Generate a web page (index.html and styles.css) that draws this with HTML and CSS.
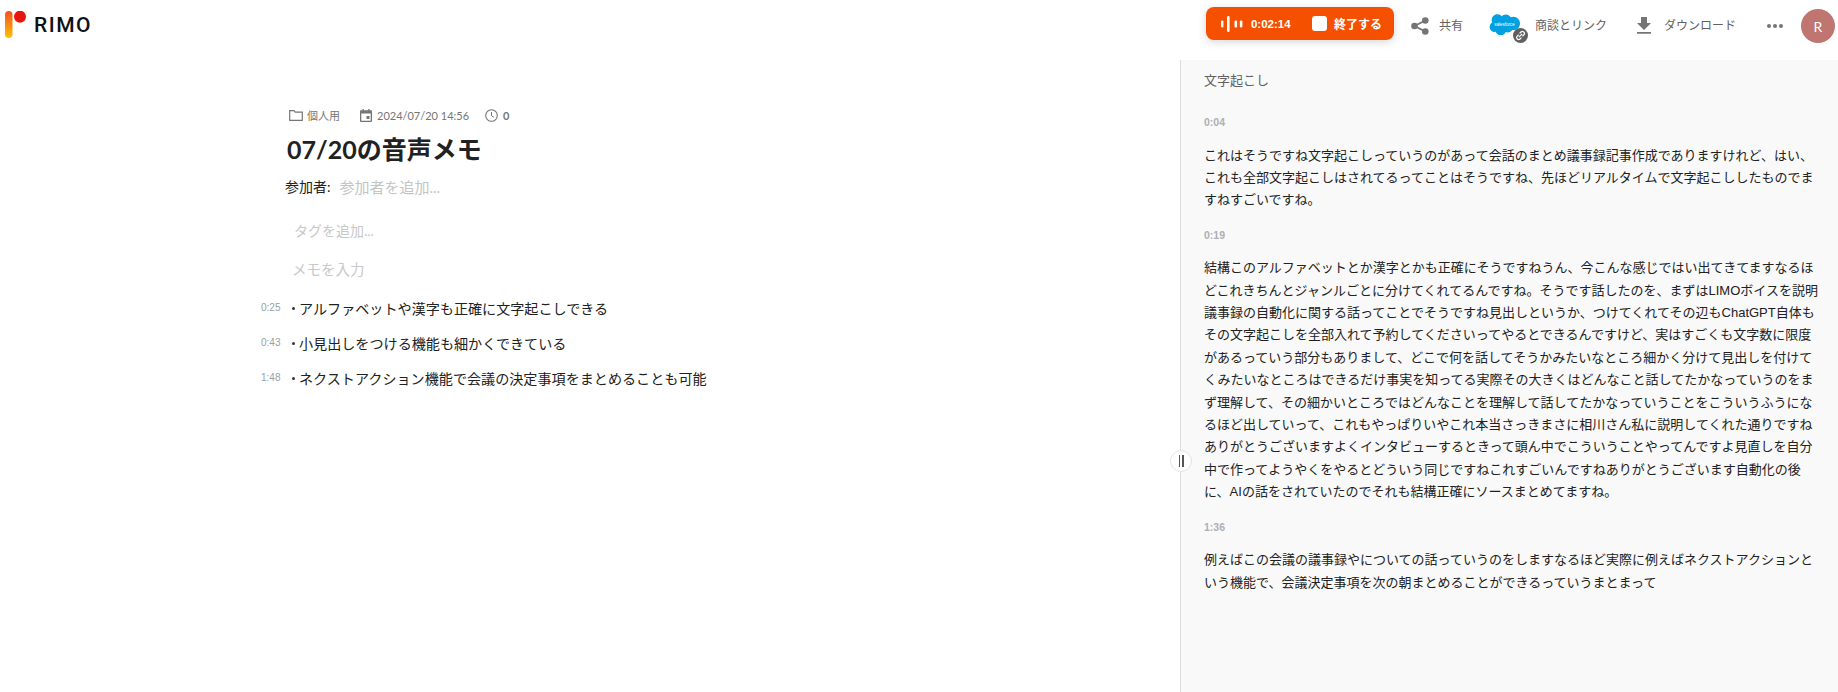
FILE: index.html
```html
<!DOCTYPE html>
<html lang="ja">
<head>
<meta charset="utf-8">
<title>07/20の音声メモ</title>
<link rel="stylesheet" href="styles.css">
</head>
<body>
<header class="topbar">
  <div class="brand">
    <svg class="brand-mark" width="26" height="28" viewBox="0 0 26 28"><defs><linearGradient id="g" x1="0" y1="0" x2="0" y2="1"><stop offset="0" stop-color="#f4511e"/><stop offset="1" stop-color="#ffc107"/></linearGradient></defs><rect x="0" y="0" width="7.500" height="27" rx="3.750" fill="url(#g)"/><circle cx="15" cy="5.700" r="6" fill="#e8160c"/></svg>
    <span class="brand-name">RIMO</span>
  </div>
  <div class="actions">
    <div class="rec">
      <svg class="rec-wave" width="22" height="18" viewBox="0 0 22 18"><g fill="#fff"><rect x="0" y="5.500" width="2.400" height="7" rx="1"/><rect x="6" y="1" width="2.600" height="16" rx="1.200"/><rect x="13.500" y="5.500" width="2.600" height="7" rx="1"/><rect x="18.800" y="5.500" width="2.600" height="7" rx="1"/></g></svg>
      <span class="rec-time">0:02:14</span>
      <span class="rec-stop"></span>
      <span class="rec-label">終了する</span>
    </div>
    <div class="action action-share">
      <svg class="icon-share" width="18" height="18" viewBox="0 0 18 18"><g fill="#757575"><circle cx="14.300" cy="3.500" r="3.300"/><circle cx="3.500" cy="9" r="3.300"/><circle cx="14.300" cy="14.500" r="3.300"/></g><path d="M14.300 3.500L3.500 9l10.800 5.500" fill="none" stroke="#757575" stroke-width="1.800"/></svg>
      <span>共有</span>
    </div>
    <div class="action action-sf">
      <span class="sf">
        <svg width="31" height="22" viewBox="0 0 31 22"><path fill="#00a1e0" d="M12.800 3.200C13.800 2.100 15.200 1.400 16.800 1.400c2.100 0 3.900 1.200 4.900 2.900.8-.4 1.800-.6 2.700-.6 3.700 0 6.600 3 6.600 6.700s-3 6.700-6.600 6.700c-.5 0-.9 0-1.300-.1-.8 1.500-2.400 2.500-4.200 2.500-.8 0-1.500-.2-2.100-.5-.8 2-2.800 3.300-5 3.300-2.300 0-4.300-1.500-5.100-3.500-.3.100-.7.100-1.100.1-2.700 0-4.900-2.200-4.900-5 0-1.900 1-3.500 2.500-4.400-.3-.7-.5-1.500-.5-2.300C2.700 3.900 5.300 1.300 8.400 1.300c1.800 0 3.400.8 4.400 1.900z"/><text x="15.500" y="12.500" class="sf-text" text-anchor="middle">salesforce</text></svg>
        <svg class="sf-badge" width="15" height="15" viewBox="0 0 16 16"><circle cx="8" cy="8" r="8" fill="#5f5f5f"/><g fill="none" stroke="#fff" stroke-width="1.300"><path d="M7 5.800l1.500-1.500a2 2 0 0 1 3 3L10 8.800"/><path d="M9 10.200l-1.500 1.500a2 2 0 0 1-3-3L6 7.200"/><path d="M6.200 9.800l3.600-3.600"/></g></svg>
      </span>
      <span>商談とリンク</span>
    </div>
    <div class="action action-dl">
      <svg class="icon-dl" width="16" height="17" viewBox="0 0 16 17"><path fill="#757575" d="M5 0h6v6h4l-7 7-7-7h4zM1 15h14v1.700H1z"/></svg>
      <span>ダウンロード</span>
    </div>
    <div class="more"><i></i><i></i><i></i></div>
    <div class="avatar">R</div>
  </div>
</header>
<main class="main">
  <section class="note">
    <div class="meta">
      <span class="meta-item meta-folder">
        <svg width="14" height="11" viewBox="0 0 14 11"><path fill="none" stroke="#757575" stroke-width="1.200" d="M.7.700h4.300l1.200 1.400h7.100v8.200H.7z"/></svg>個人用</span>
      <span class="meta-item meta-date">
        <svg width="12" height="13" viewBox="0 0 12 13"><path fill="#757575" d="M2.500 0h1.300v1.300h4.400V0h1.300v1.300H11a1 1 0 0 1 1 1V12a1 1 0 0 1-1 1H1a1 1 0 0 1-1-1V2.300a1 1 0 0 1 1-1h1.500zM1.300 4.500v7.200h9.400V4.500z"/><rect x="6.500" y="7" width="3" height="3" fill="#757575"/></svg>2024/07/20 14:56</span>
      <span class="meta-item meta-clock">
        <svg width="13" height="13" viewBox="0 0 13 13"><circle cx="6.500" cy="6.500" r="5.800" fill="none" stroke="#757575" stroke-width="1.100"/><path d="M6.500 3v3.800l2.500 1.500" fill="none" stroke="#757575" stroke-width="1"/></svg>0</span>
    </div>
    <h1 class="title">07/20の音声メモ</h1>
    <div class="people"><span class="people-label">参加者:</span><span class="people-add">参加者を追加...</span></div>
    <div class="tags">タグを追加...</div>
    <div class="memo">メモを入力</div>
    <ul class="points">
      <li class="point"><span class="point-time">0:25</span><span class="point-dot"></span><span>アルファベットや漢字も正確に文字起こしできる</span></li>
      <li class="point"><span class="point-time">0:43</span><span class="point-dot"></span><span>小見出しをつける機能も細かくできている</span></li>
      <li class="point"><span class="point-time">1:48</span><span class="point-dot"></span><span>ネクストアクション機能で会議の決定事項をまとめることも可能</span></li>
    </ul>
  </section>
  <aside class="transcript">
    <span class="handle"><i></i><i></i></span>
    <div class="transcript-head">文字起こし</div>
    <div class="seg">
      <div class="seg-time">0:04</div>
      <p class="seg-text">これはそうですね文字起こしっていうのがあって会話のまとめ議事録記事作成でありますけれど、はい、これも全部文字起こしはされてるってことはそうですね、先ほどリアルタイムで文字起こししたものでますねすごいですね。</p>
    </div>
    <div class="seg">
      <div class="seg-time">0:19</div>
      <p class="seg-text">結構このアルファベットとか漢字とかも正確にそうですねうん、今こんな感じではい出てきてますなるほどこれきちんとジャンルごとに分けてくれてるんですね。そうです話したのを、まずはLIMOボイスを説明議事録の自動化に関する話ってことでそうですね見出しというか、つけてくれてその辺もChatGPT自体もその文字起こしを全部入れて予約してくださいってやるとできるんですけど、実はすごくも文字数に限度があるっていう部分もありまして、どこで何を話してそうかみたいなところ細かく分けて見出しを付けてくみたいなところはできるだけ事実を知ってる実際その大きくはどんなこと話してたかなっていうのをまず理解して、その細かいところではどんなことを理解して話してたかなっていうことをこういうふうになるほど出していって、これもやっぱりいやこれ本当さっきまさに相川さん私に説明してくれた通りですねありがとうございますよくインタビューするときって頭ん中でこういうことやってんですよ見直しを自分中で作ってようやくをやるとどういう同じですねこれすごいんですねありがとうございます自動化の後に、AIの話をされていたのでそれも結構正確にソースまとめてますね。</p>
    </div>
    <div class="seg">
      <div class="seg-time">1:36</div>
      <p class="seg-text">例えばこの会議の議事録やについての話っていうのをしますなるほど実際に例えばネクストアクションという機能で、会議決定事項を次の朝まとめることができるっていうまとまって</p>
    </div>
  </aside>
</main>
</body>
</html>
```
FILE: styles.css
```css
* { box-sizing: border-box; }
html, body { margin: 0; height: 100%; overflow: hidden; }
body {
  font-family: Lato, "Noto Sans CJK JP", sans-serif;
  color: #212121;
  background: #fff;
  width: 1838px;
  height: 692px;
}
.topbar {
  height: 60px;
  display: flex;
  align-items: flex-start;
  justify-content: space-between;
}
.brand { display: flex; align-items: flex-start; padding: 11px 0 0 5px; }
.brand-mark { display: block; flex: none; }
.brand-name {
  font-family: Roboto, sans-serif;
  font-weight: 500;
  font-size: 21px;
  line-height: 20px;
  letter-spacing: 1.500px;
  color: #111;
  margin: 4px 0 0 3px;
}
.actions { display: flex; align-items: flex-start; padding-right: 3px; }
.rec {
  margin-top: 7px;
  width: 188px;
  height: 33px;
  background: #f55000;
  border-radius: 8px;
  box-shadow: 0 2px 8px rgba(0,0,0,.16);
  display: flex;
  align-items: center;
  padding-left: 15px;
  color: #fff;
  font-weight: 700;
  font-size: 12px;
}
.rec-wave { flex: none; display: block; }
.rec-time { margin-left: 8px; width: 61px; font-family: "Liberation Sans", sans-serif; font-size: 11.500px; }
.rec-stop { width: 15px; height: 15px; background: #fff; border-radius: 3px; flex: none; }
.rec-label { margin-left: 7px; font-family: "Noto Sans CJK JP", sans-serif; }
.action {
  display: flex;
  align-items: center;
  height: 20px;
  margin-top: 14px;
  font-size: 12px;
  color: #616161;
  font-family: "Noto Sans CJK JP", sans-serif;
}
.action svg { display: block; flex: none; }
.action-share { margin-left: 17px; gap: 10px; }
.action-sf { margin-left: 26px; gap: 15px; }
.action-dl { margin-left: 29px; gap: 12px; }
.action .icon-share { margin-top: 4px; }
.action .icon-dl { margin-top: 2px; }
.sf { position: relative; display: block; width: 31px; height: 22px; }
.sf-text { font: 4.500px "Liberation Sans", sans-serif; fill: #fff; }
.sf .sf-badge { position: absolute; left: 24px; top: 15px; }
.more { display: flex; gap: 2px; margin: 24px 0 0 31px; }
.more i { width: 4px; height: 4px; border-radius: 50%; background: #757575; display: block; }
.avatar {
  width: 34px;
  height: 34px;
  margin: 9px 0 0 18px;
  border-radius: 50%;
  background: #bf7570;
  color: #fff;
  font-size: 14px;
  display: flex;
  align-items: center;
  justify-content: center;
}
.main { display: flex; height: 632px; }
.note { width: 1180px; flex: none; padding: 47px 0 0 261px; }
.meta { display: flex; align-items: center; height: 16px; padding-left: 28px; font-size: 11px; color: #757575; }
.meta-item { display: flex; align-items: center; gap: 5px; }
.meta-item svg { display: block; flex: none; }
.meta-folder { gap: 4px; }
.meta-date { margin-left: 20px; }
.meta-clock { margin-left: 16px; font-weight: 700; }
.title { margin: 8px 0 0 26px; font-size: 25px; line-height: 36px; font-weight: 700; color: #212121; }
.people { display: flex; align-items: center; margin: 10px 0 0 24px; font-size: 14px; line-height: 20px; }
.people-label { font-weight: 400; }
.people-add { margin-left: 9px; font-size: 15px; color: #c4c4c4; }
.tags { margin: 24px 0 0 33px; font-size: 14px; line-height: 20px; color: #c8c8c8; }
.memo { margin: 19px 0 0 31px; font-size: 14.500px; line-height: 20px; color: #c8c8c8; }
.points { list-style: none; margin: 10.500px 0 0; padding: 0; }
.point { display: flex; align-items: center; height: 35px; font-size: 14.100px; color: #212121; }
.point-time { width: 28px; font-family: "Liberation Sans", sans-serif; font-size: 10px; color: #98a0a6; position: relative; top: -1px; }
.point-dot { width: 3px; height: 3px; border-radius: 50%; background: #333; margin: 0 4px 0 3px; flex: none; }
.transcript {
  position: relative;
  flex: 1;
  background: #f9f9f9;
  border-left: 1px solid #ddd;
  padding: 10px 20px 0 23px;
}
.handle {
  position: absolute;
  left: -11px;
  top: 390px;
  width: 22px;
  height: 22px;
  border-radius: 50%;
  background: #fff;
  border: 1px solid #e3e3e3;
  display: flex;
  align-items: center;
  justify-content: center;
  gap: 2px;
}
.handle i { width: 1.500px; height: 12px; background: #555; display: block; }
.transcript-head { font-size: 13px; line-height: 20px; color: #616161; font-family: "Noto Sans CJK JP", sans-serif; margin-bottom: 22px; }
.seg-time { font-family: "Liberation Sans", sans-serif; font-weight: 700; font-size: 10.500px; line-height: 20px; color: #aeaeb4; }
.seg-text {
  margin: 12.500px 0 13px;
  font-family: "Liberation Sans", "Noto Sans CJK JP", sans-serif;
  font-size: 13px;
  line-height: 22.400px;
  color: #212121;
}
```
